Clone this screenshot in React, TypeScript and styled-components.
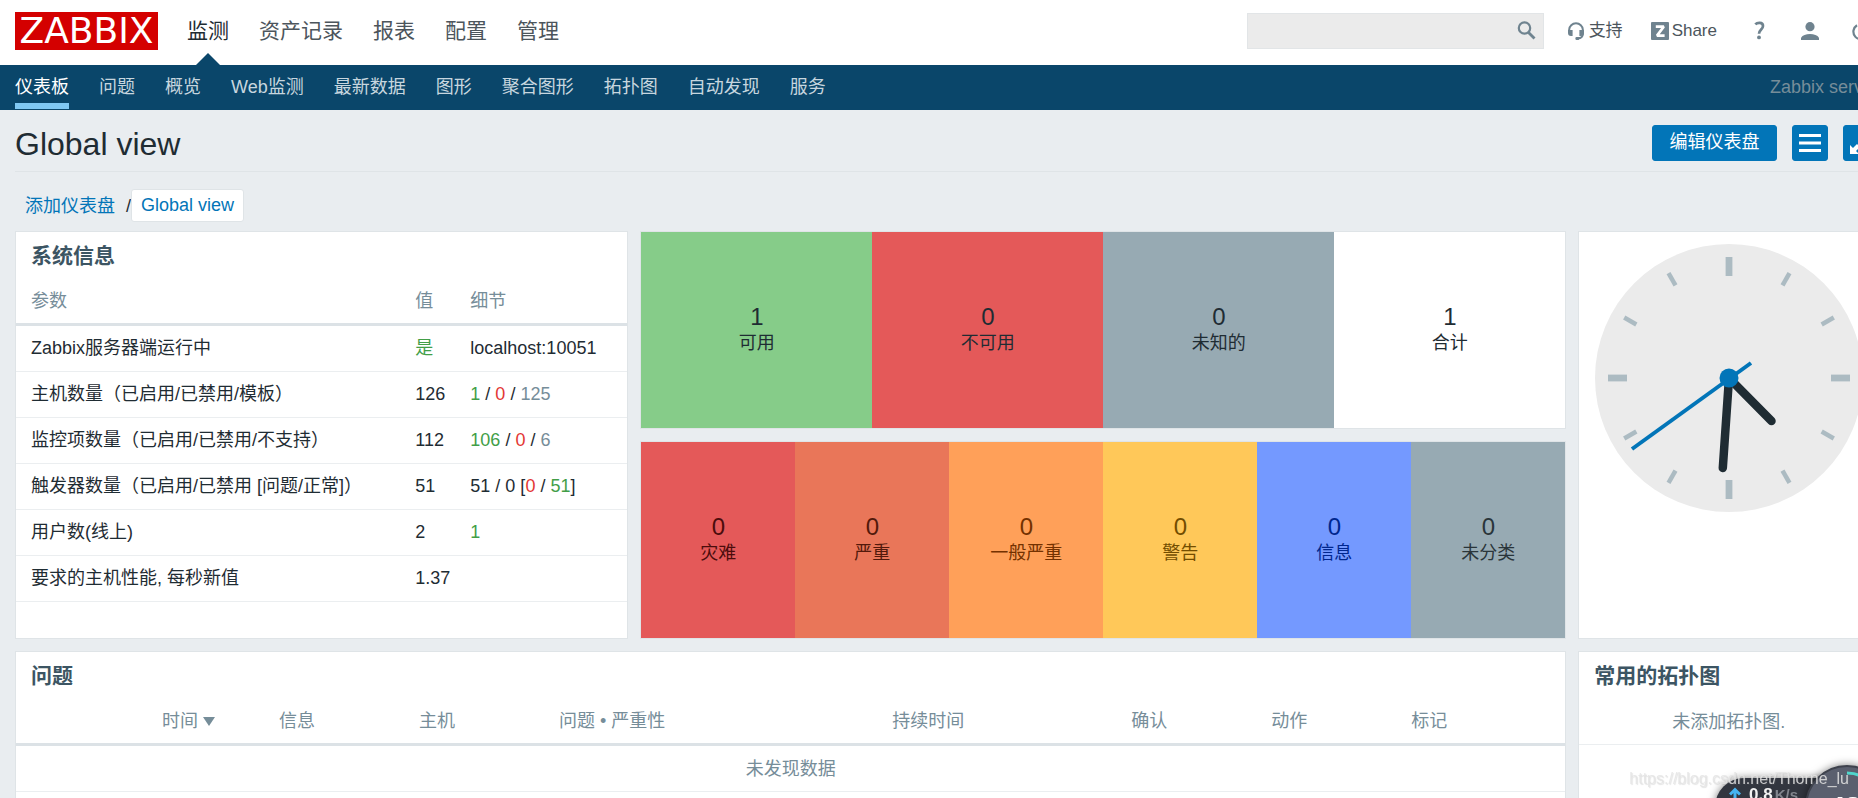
import React from "react";
import styled, { createGlobalStyle } from "styled-components";

const GlobalStyle = createGlobalStyle`
  *, *::before, *::after { box-sizing: border-box; }
  html, body { height: 100%; }
  body {
    margin: 0;
    overflow: hidden;
    background: #e9edf0;
    color: #1f2c33;
    font-family: "Liberation Sans", "Noto Sans CJK SC", sans-serif;
    font-size: 18px;
    line-height: 24px;
  }
  a { color: inherit; text-decoration: none; }
  button, input { font: inherit; }
`;

/* The dashboard is slightly wider than the window and runs off its right side. */
const Page = styled.div`
  width: calc(100% + 36px);
`;

const Header = styled.header`
  display: flex;
  align-items: center;
  height: 65px;
  padding: 0 24px 0 15px;
  background: #fff;
`;

const Logo = styled.a`
  width: 143px;
  height: 38px;
  margin: 0 29px 4px 0;
  background: #d40000;
  color: #fff;
  font-family: "DejaVu Sans", sans-serif;
  font-size: 36px;
  line-height: 38px;
  text-align: center;
`;

const MainNav = styled.nav`
  display: flex;
  align-self: stretch;
  gap: 30px;
  font-size: 21px;
`;

const MainLink = styled.a<{ $active?: boolean }>`
  position: relative;
  line-height: 61px;
  color: ${(p) => (p.$active ? "#1f2c33" : "#4c555c")};
  ${(p) =>
    p.$active &&
    `&::after {
      content: "";
      position: absolute;
      left: 50%;
      bottom: 0;
      margin-left: -12px;
      border: 12px solid transparent;
      border-top: 0;
      border-bottom-color: #0a466a;
    }`}
`;

const SearchForm = styled.form`
  position: relative;
  width: 297px;
  height: 36px;
  margin: 0 24px 3px auto;
`;

const SearchInput = styled.input`
  width: 100%;
  height: 100%;
  padding: 0 36px 0 8px;
  border: 1px solid #e2e5e7;
  border-radius: 0;
  background: #ebebeb;
`;

const SearchButton = styled.button`
  position: absolute;
  top: 8px;
  right: 8px;
  display: flex;
  padding: 0;
  border: 0;
  background: none;
`;

const Tools = styled.div`
  display: flex;
  align-items: center;
  gap: 28px;
  padding-bottom: 4px;
  color: #4c555c;
  font-size: 17px;
`;

const ToolLink = styled.a<{ $gap?: number }>`
  display: flex;
  align-items: center;
  gap: ${(p) => p.$gap ?? 3}px;
`;

const IconTools = styled.div`
  display: flex;
  align-items: center;
  gap: 33px;
  margin-left: 9px;
`;

const SubNav = styled.nav`
  display: flex;
  gap: 30px;
  height: 45px;
  padding: 0 15px;
  background: #0a466a;
  color: #c7d6df;
`;

const SubLink = styled.a<{ $active?: boolean }>`
  height: 44px;
  line-height: 45px;
  color: ${(p) => (p.$active ? "#fff" : "inherit")};
  border-bottom: ${(p) => (p.$active ? "6px solid #80c8f3" : "0")};
`;

const ServerName = styled.span`
  margin-left: auto;
  line-height: 45px;
  color: #768d99;
`;

const Main = styled.main`
  padding: 0 15px;
`;

const TitleRow = styled.div`
  display: flex;
  align-items: center;
  justify-content: space-between;
  height: 62px;
  border-bottom: 1px solid #dfe4e7;
`;

const PageTitle = styled.h1`
  margin: 6px 0 0;
  font-size: 32px;
  font-weight: 400;
  line-height: 40px;
`;

const Actions = styled.div`
  display: flex;
  gap: 15px;
  padding-top: 5px;
`;

const Button = styled.button<{ $square?: boolean }>`
  display: flex;
  align-items: center;
  justify-content: center;
  width: ${(p) => (p.$square ? "36px" : "auto")};
  min-width: ${(p) => (p.$square ? "36px" : "125px")};
  height: 36px;
  padding: ${(p) => (p.$square ? "0" : "0 16px 2px")};
  border: 1px solid #0275b8;
  border-radius: 3px;
  background: #0275b8;
  color: #fff;
`;

const Breadcrumb = styled.nav`
  display: flex;
  align-items: center;
  padding: 17px 0 9px 10px;
  color: #0275b8;
`;

const Slash = styled.span`
  margin-left: 11px;
  color: #1f2c33;
`;

const Crumb = styled.a`
  padding: 4px 9px 5px;
  height: 33px;
  line-height: 22px;
  border: 1px solid #dfe4e7;
  border-radius: 3px;
  background: #fff;
`;

const Dashboard = styled.div`
  display: grid;
  grid-template-columns: repeat(12, minmax(0, 1fr));
  grid-auto-rows: minmax(198px, auto);
  gap: 12px;
`;

const Widget = styled.section<{ $cols: number; $rows?: number }>`
  grid-column: span ${(p) => p.$cols};
  grid-row: span ${(p) => p.$rows ?? 1};
  border: 1px solid #dfe4e7;
  background: #fff;
`;

const WidgetTitle = styled.h4`
  margin: 0;
  padding: 10px 15px 7px;
  color: #3c5563;
  font-size: 21px;
  font-weight: 700;
  line-height: 28px;
`;

const Table = styled.table<{ $indent: number }>`
  width: 100%;
  table-layout: fixed;
  border-collapse: separate;
  border-spacing: 0;

  th, td {
    height: 46px;
    padding: 0 0 2px ${(p) => p.$indent}px;
    border-bottom: 1px solid #ebeef0;
    text-align: left;
    font-weight: 400;
    white-space: nowrap;
  }
  th {
    height: 49px;
    padding-top: 2px;
    padding-bottom: 0;
    border-bottom: 3px solid #dce2e6;
    color: #768d99;
  }
`;

const Col = styled.col<{ $w?: number }>`
  width: ${(p) => (p.$w ? `${p.$w}px` : "auto")};
`;

const tones = { green: "#429e47", red: "#e33734", grey: "#768d99" };
const Tone = styled.span<{ $tone: keyof typeof tones }>`
  color: ${(p) => tones[p.$tone]};
`;

const EmptyCell = styled.td`
  && {
    padding: 0;
    text-align: center;
    color: #768d99;
  }
`;

const EmptyNote = styled.p`
  margin: 0;
  height: 48px;
  padding: 13px 0 0;
  border-bottom: 1px solid #ebeef0;
  color: #768d99;
  text-align: center;
`;

const SortArrow = styled.span`
  display: inline-block;
  margin-left: 5px;
  vertical-align: 1px;
  border: 6px solid transparent;
  border-top: 9px solid #768d99;
  border-bottom: 0;
`;

const Tiles = styled.div`
  display: flex;
  height: 100%;
`;

const Tile = styled.div<{ $bg: string; $fg?: string }>`
  flex: 1;
  display: flex;
  flex-direction: column;
  align-items: center;
  justify-content: center;
  padding-bottom: 2px;
  background: ${(p) => p.$bg};
  color: ${(p) => p.$fg ?? "#1f2c33"};
`;

const TileCount = styled.span`
  font-size: 24px;
  line-height: 28px;
`;

const ClockBox = styled.div`
  display: flex;
  justify-content: center;
  padding-top: 12px;
`;

const Monitor = styled.aside`
  position: fixed;
  right: -31px;
  bottom: -51px;
  width: 174px;
  height: 84px;
`;

const SpeedPill = styled.div`
  position: absolute;
  left: 0;
  top: 13px;
  width: 130px;
  height: 58px;
  padding: 7px 0 0 14px;
  border-radius: 29px;
  background: #32363f;
  box-shadow: 0 0 8px rgba(0, 0, 0, 0.5);
  color: #f2f2f2;
  font-size: 17px;
  font-weight: 700;
  line-height: 20px;
  display: flex;
  align-items: flex-start;
  gap: 8px;
`;

const Unit = styled.span`
  margin-left: 2px;
  color: #82868e;
  font-size: 15px;
  font-weight: 700;
`;

const UsageBall = styled.div`
  position: absolute;
  left: 90px;
  top: 0;
  width: 84px;
  height: 84px;
  padding-top: 26px;
  border: 2px solid #3e424d;
  border-radius: 50%;
  background: #5a5f6e;
  box-shadow: 0 0 8px rgba(0, 0, 0, 0.5);
  color: #fff;
  font-size: 28px;
  font-weight: 700;
  line-height: 28px;
  padding-right: 4px;
  text-align: center;
`;

const UsageArc = styled.svg`
  position: absolute;
  left: 0;
  top: 0;
`;

const Watermark = styled.span`
  position: fixed;
  right: 9px;
  bottom: 9px;
  color: rgba(228, 228, 228, 0.85);
  font-size: 16px;
  line-height: 20px;
  text-shadow: 1px 1px 1px rgba(120, 120, 120, 0.2);
`;

const ICON = "#6f838f";

const SearchIcon = () => (
  <svg width="19" height="19" viewBox="0 0 19 19" fill="none" stroke={ICON}>
    <circle cx="7.5" cy="7" r="5.7" strokeWidth="2.2" />
    <path d="M11.5 11.5 17.5 17.5" strokeWidth="2.8" />
  </svg>
);

const HeadsetIcon = () => (
  <svg width="16" height="18" viewBox="0 0 16 18">
    <path d="M1.2 9.5V7.6a6.8 6.3 0 0 1 13.6 0v4.4c0 3-2 4.2-4.8 4.3" fill="none" stroke={ICON} strokeWidth="2" />
    <path d="M0 8h4.6v6H3a3 3 0 0 1-3-3zM11.4 8H16v3a3 3 0 0 1-3 3h-1.6z" fill={ICON} />
    <rect x="7.4" y="15" width="4" height="3" rx="1.2" fill={ICON} />
  </svg>
);

const ShareIcon = () => (
  <svg width="18" height="18" viewBox="0 0 18 18">
    <rect width="18" height="18" rx="1" fill={ICON} />
    <path d="M4.8 4.6h8L6 13.6h7.6" fill="none" stroke="#fff" strokeWidth="2.6" strokeLinejoin="bevel" />
  </svg>
);

const HelpIcon = () => (
  <svg width="14" height="19" viewBox="0 0 14 19">
    <path d="M1.3 3.4C3 1.5 9 .6 9 5c0 3.400-4 3.600-4 7.800" fill="none" stroke={ICON} strokeWidth="2.700" />
    <circle cx="5" cy="16.400" r="1.900" fill={ICON} />
  </svg>
);

const UserIcon = () => (
  <svg width="18" height="18" viewBox="0 0 18 18" fill={ICON}>
    <circle cx="9" cy="4.700" r="4.600" />
    <path d="M0 18v-2.200C1.500 13.200 5 12 9 12s7.500 1.200 9 3.800V18z" />
  </svg>
);

const PowerIcon = () => (
  <svg width="18" height="18" viewBox="0 0 18 18" fill="none" stroke={ICON} strokeWidth="2.200">
    <path d="M5 3.200a7.600 7.600 0 1 0 8 0M9 0v9" />
  </svg>
);

const MenuIcon = () => (
  <svg width="22" height="20" viewBox="0 0 22 20" fill="none" stroke="#fff" strokeWidth="3">
    <path d="M0 2.500h22M0 10h22M0 17.500h22" />
  </svg>
);

const ExpandIcon = () => (
  <svg width="22" height="22" viewBox="0 0 22 22" fill="#fff">
    <path d="M0 22v-9l3 3 4-4 3 3-4 4 3 3zM22 0v9l-3-3-4 4-3-3 4-4-3-3z" />
  </svg>
);

const UpArrow = () => (
  <svg width="12" height="18" viewBox="0 0 12 18" fill="none" stroke="#45b4f2" strokeWidth="3">
    <path d="M6 18V5M1 9.500 6 4.500l5 5" />
  </svg>
);

const TICKS = [0, 30, 60, 90, 120, 150, 180, 210, 240, 270, 300, 330];

const Clock = () => (
  <svg width="268" height="268" viewBox="-134 -134 268 268" role="img" aria-label="时钟">
    <circle r="134" fill="#ebebeb" />
    {TICKS.map((a) => (
      <line
        key={a}
        y1={-121}
        y2={a % 90 ? -107 : -102}
        stroke="#acbbc2"
        strokeWidth={a % 90 ? 4.5 : 6.8}
        transform={`rotate(${a})`}
      />
    ))}
    <g fill="none" strokeLinecap="round" stroke="#1f2c33" strokeWidth="8.500">
      <path d="M0 0 42.500 43" />
      <path d="M0 0-6.200 90" />
    </g>
    <path d="M22-15-97 71" stroke="#0275b8" strokeWidth="4" />
    <circle r="9.500" fill="#0275b8" />
  </svg>
);

const MAIN_LINKS = ["监测", "资产记录", "报表", "配置", "管理"];
const SUB_LINKS = ["仪表板", "问题", "概览", "Web监测", "最新数据", "图形", "聚合图形", "拓扑图", "自动发现", "服务"];

const SYSTEM_ROWS: [string, React.ReactNode, React.ReactNode][] = [
  ["Zabbix服务器端运行中", <Tone $tone="green">是</Tone>, "localhost:10051"],
  [
    "主机数量（已启用/已禁用/模板）",
    "126",
    <><Tone $tone="green">1</Tone> / <Tone $tone="red">0</Tone> / <Tone $tone="grey">125</Tone></>,
  ],
  [
    "监控项数量（已启用/已禁用/不支持）",
    "112",
    <><Tone $tone="green">106</Tone> / <Tone $tone="red">0</Tone> / <Tone $tone="grey">6</Tone></>,
  ],
  [
    "触发器数量（已启用/已禁用 [问题/正常]）",
    "51",
    <>51 / 0 [<Tone $tone="red">0</Tone> / <Tone $tone="green">51</Tone>]</>,
  ],
  ["用户数(线上)", "2", <Tone $tone="green">1</Tone>],
  ["要求的主机性能, 每秒新值", "1.37", ""],
];

const HOST_TILES = [
  { n: 1, label: "可用", bg: "#86cc89" },
  { n: 0, label: "不可用", bg: "#e45959" },
  { n: 0, label: "未知的", bg: "#97aab3" },
  { n: 1, label: "合计", bg: "#ffffff" },
];

const SEVERITY_TILES = [
  { n: 0, label: "灾难", bg: "#e45959", fg: "#4b0c0c" },
  { n: 0, label: "严重", bg: "#e97659", fg: "#52190b" },
  { n: 0, label: "一般严重", bg: "#ffa059", fg: "#733100" },
  { n: 0, label: "警告", bg: "#ffc859", fg: "#734d00" },
  { n: 0, label: "信息", bg: "#7499ff", fg: "#00268e" },
  { n: 0, label: "未分类", bg: "#97aab3", fg: "#2a353a" },
];

const PROBLEM_HEADS = ["信息", "主机", "问题 • 严重性", "持续时间", "确认", "动作", "标记"];

const TileRow = ({ tiles }: { tiles: { n: number; label: string; bg: string; fg?: string }[] }) => (
  <Tiles>
    {tiles.map((t) => (
      <Tile key={t.label} $bg={t.bg} $fg={t.fg}>
        <TileCount>{t.n}</TileCount>
        <span>{t.label}</span>
      </Tile>
    ))}
  </Tiles>
);

export default function App() {
  return (
    <>
      <GlobalStyle />
      <Page>
        <Header>
          <Logo href="#">ZABBIX</Logo>
          <MainNav>
            {MAIN_LINKS.map((l, i) => (
              <MainLink key={l} href="#" $active={i === 0}>{l}</MainLink>
            ))}
          </MainNav>
          <SearchForm>
            <SearchInput type="text" aria-label="搜索" />
            <SearchButton type="button" aria-label="搜索"><SearchIcon /></SearchButton>
          </SearchForm>
          <Tools>
            <ToolLink href="#" $gap={5}><HeadsetIcon />支持</ToolLink>
            <ToolLink href="#"><ShareIcon />Share</ToolLink>
            <IconTools>
              <ToolLink href="#" aria-label="帮助"><HelpIcon /></ToolLink>
              <ToolLink href="#" aria-label="用户"><UserIcon /></ToolLink>
              <ToolLink href="#" aria-label="登出"><PowerIcon /></ToolLink>
            </IconTools>
          </Tools>
        </Header>
        <SubNav>
          {SUB_LINKS.map((l, i) => (
            <SubLink key={l} href="#" $active={i === 0}>{l}</SubLink>
          ))}
          <ServerName>Zabbix server</ServerName>
        </SubNav>

        <Main>
          <TitleRow>
            <PageTitle>Global view</PageTitle>
            <Actions>
              <Button type="button">编辑仪表盘</Button>
              <Button type="button" $square aria-label="菜单"><MenuIcon /></Button>
              <Button type="button" $square aria-label="全屏"><ExpandIcon /></Button>
            </Actions>
          </TitleRow>
          <Breadcrumb>
            <a href="#">添加仪表盘</a>
            <Slash>/</Slash>
            <Crumb href="#">Global view</Crumb>
          </Breadcrumb>

          <Dashboard>
            <Widget $cols={4} $rows={2}>
              <WidgetTitle>系统信息</WidgetTitle>
              <Table $indent={15}>
                <colgroup><Col /><Col $w={55} /><Col $w={172} /></colgroup>
                <thead>
                  <tr><th>参数</th><th>值</th><th>细节</th></tr>
                </thead>
                <tbody>
                  {SYSTEM_ROWS.map(([name, value, details]) => (
                    <tr key={name}><td>{name}</td><td>{value}</td><td>{details}</td></tr>
                  ))}
                </tbody>
              </Table>
            </Widget>
            <Widget $cols={6}><TileRow tiles={HOST_TILES} /></Widget>
            <Widget $cols={2} $rows={2}>
              <ClockBox><Clock /></ClockBox>
            </Widget>
            <Widget $cols={6}><TileRow tiles={SEVERITY_TILES} /></Widget>
            <Widget $cols={10}>
              <WidgetTitle>问题</WidgetTitle>
              <Table $indent={8}>
                <colgroup>
                  <Col $w={138} /><Col $w={117} /><Col $w={140} /><Col $w={140} /><Col />
                  <Col $w={239} /><Col $w={140} /><Col $w={140} /><Col $w={162} />
                </colgroup>
                <thead>
                  <tr>
                    <th />
                    <th>时间<SortArrow /></th>
                    {PROBLEM_HEADS.map((h) => <th key={h}>{h}</th>)}
                  </tr>
                </thead>
                <tbody>
                  <tr><EmptyCell colSpan={9}>未发现数据</EmptyCell></tr>
                </tbody>
              </Table>
            </Widget>
            <Widget $cols={2}>
              <WidgetTitle>常用的拓扑图</WidgetTitle>
              <EmptyNote>未添加拓扑图.</EmptyNote>
            </Widget>
          </Dashboard>
        </Main>
      </Page>

      <Monitor>
        <SpeedPill>
          <UpArrow />
          <span>0.8<Unit>K/s</Unit></span>
        </SpeedPill>
        <UsageBall>
          <UsageArc width="80" height="80" viewBox="0 0 80 80" fill="none" stroke="#4fd6cc" strokeWidth="3">
            <path d="M40 6a34 34 0 0 1 34 34" />
          </UsageArc>
          48
        </UsageBall>
      </Monitor>
      <Watermark>https://blog.csdn.net/Thorne_lu</Watermark>
    </>
  );
}
